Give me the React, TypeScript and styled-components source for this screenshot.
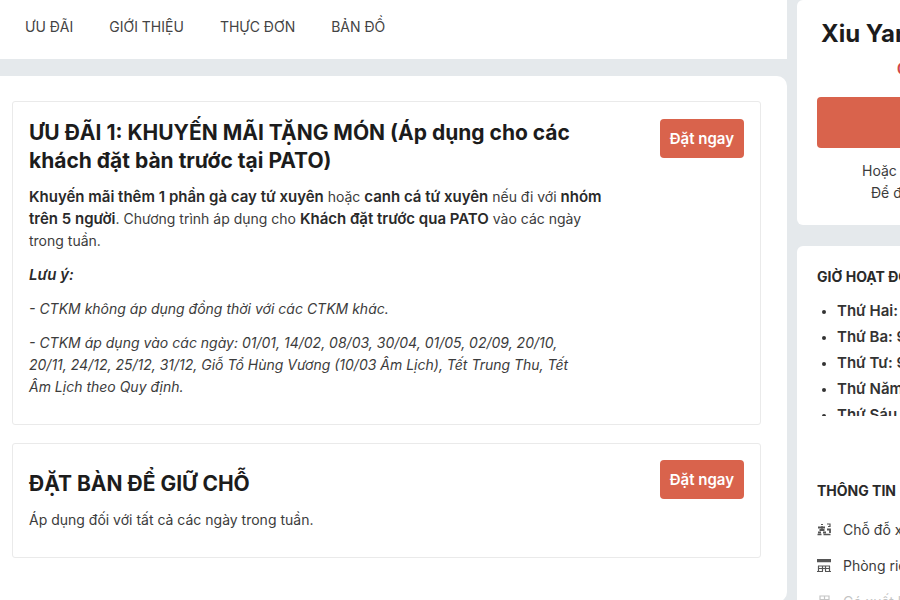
import React from "react";
import styled, { createGlobalStyle } from "styled-components";

const GlobalStyle = createGlobalStyle`
  *, *::before, *::after { box-sizing: border-box; }
  body {
    margin: 0;
    overflow: hidden;
    background: #e5e9ec;
    color: #3c3c3c;
    font-family: Inter, "Noto Sans", sans-serif;
    font-size: 14px;
    line-height: 22px;
  }
  h1, h2, h3, p, ul { margin: 0; padding: 0; }
`;

const Page = styled.div`
  display: flex;
  align-items: flex-start;
  gap: 10px;
  height: 100vh;
  overflow: hidden;
`;

const Main = styled.main`
  flex: 1;
  min-width: 0;
  display: flex;
  flex-direction: column;
  gap: 17px;
`;

const TabBar = styled.nav`
  display: flex;
  gap: 36px;
  padding: 16px 25px 21px;
  background: #fff;
`;

const TabLink = styled.a`
  color: #444;
  text-decoration: none;
`;

const OfferPanel = styled.section`
  display: flex;
  flex-direction: column;
  gap: 18px;
  padding: 25px 26px 44px 12px;
  background: #fff;
  border-radius: 0 10px 10px 0;
`;

const OfferCard = styled.article<{ $compact?: boolean }>`
  display: flex;
  align-items: flex-start;
  justify-content: space-between;
  gap: 50px;
  padding: ${(p) => (p.$compact ? "16px 16px 26px" : "17px 16px 26px")};
  border: 1px solid #eaeaea;
  border-radius: 3px;
`;

const OfferBody = styled.div<{ $compact?: boolean }>`
  flex: 1;
  padding-top: ${(p) => (p.$compact ? "10px" : "0")};
`;

const OfferTitle = styled.h2`
  margin-bottom: 11px;
  color: #1c1c1c;
  font-size: 21px;
  font-weight: 700;
  line-height: 28px;
`;

const OfferText = styled.p<{ $note?: boolean }>`
  padding-right: ${(p) => (p.$note ? "16px" : "0")};
  font-style: ${(p) => (p.$note ? "italic" : "normal")};

  & + & { margin-top: 12px; }
`;

const Strong = styled.strong`
  color: #2a2a2a;
  font-size: 15px;
  font-weight: 600;
`;

const BookButton = styled.button`
  flex: none;
  padding: 8px 10px;
  border: 0;
  border-radius: 4px;
  background: #d9634c;
  color: #fff;
  font: 600 15px/23px Inter, "Noto Sans", sans-serif;
  cursor: pointer;
`;

const Sidebar = styled.aside`
  flex: none;
  width: 310px;
  margin-right: -207px;
  display: flex;
  flex-direction: column;
  gap: 21px;
  white-space: nowrap;
`;

const SideCard = styled.section`
  padding: 20px;
  background: #fff;
  border-radius: 6px;
`;

const Restaurant = styled.h1`
  padding-left: 4px;
  color: #1c1c1c;
  font-size: 24px;
  font-weight: 700;
  line-height: 28px;
`;

const Distance = styled.p`
  padding: 10px 0 17px 80px;
  color: #d0474a;
  font-weight: 700;
`;

const ReserveButton = styled(BookButton)`
  display: block;
  width: 100%;
  height: 51px;
`;

const CallNote = styled.p<{ $indent: number }>`
  padding-left: ${(p) => p.$indent}px;
`;

const CallNotes = styled.div`
  padding: 12px 0 1px;
`;

const SideTitle = styled.h3`
  color: #2a2a2a;
  font-size: 14px;
  font-weight: 700;
  line-height: 22px;
`;

const Hours = styled.ul`
  height: 118px;
  margin: 10px 0 64px;
  padding-left: 20px;
  overflow: hidden;
  color: #333;
  font-size: 15px;
  font-weight: 600;
  line-height: 26px;

  li::marker { font-size: 12px; }
`;

const Amenities = styled.ul`
  display: flex;
  flex-direction: column;
  gap: 14px;
  padding-top: 17px;
  list-style: none;
`;

const Amenity = styled.li<{ $off?: boolean }>`
  display: flex;
  align-items: center;
  gap: 12px;
  opacity: ${(p) => (p.$off ? 0.3 : 1)};

  svg { display: block; width: 14px; height: 14px; }
`;

const ParkingIcon = () => (
  <svg viewBox="0 0 14 14" fill="none" stroke="#555" aria-hidden="true">
    <path d="M4 1.500h2M10 1h3v2.500h-2" strokeWidth="1.200" />
    <path d="M1 4.500h7M2.500 7h5M1 9.500h3M6 9.500h3M10 6.500h3v3.500" strokeWidth="1.800" />
    <path d="M0.500 11.500h4M6.500 11.500h7M5 3v5" strokeWidth="1.300" />
  </svg>
);

const RoomIcon = () => (
  <svg viewBox="0 0 14 14" fill="none" stroke="#555" aria-hidden="true">
    <path d="M0 1.500h14" strokeWidth="3.500" />
    <path d="M1 7h12M1 9.500h12M0 12.500h6M8 12.500h6M1.500 7v5M5.500 7v5M8.500 7v5M12.500 7v5" strokeWidth="1.200" />
  </svg>
);

const InvoiceIcon = () => (
  <svg viewBox="0 0 14 14" fill="none" stroke="#444" aria-hidden="true">
    <path d="M3 1h9v12H3zM3 4.500h9M3 7.500h9M3 10.500h9M7.500 1v12" strokeWidth="1.200" />
  </svg>
);

const tabs = [
  { label: "ƯU ĐÃI", href: "#uu-dai" },
  { label: "GIỚI THIỆU", href: "#gioi-thieu" },
  { label: "THỰC ĐƠN", href: "#thuc-don" },
  { label: "BẢN ĐỒ", href: "#ban-do" },
];

export default function App() {
  return (
    <>
      <GlobalStyle />
      <Page>
        <Main>
          <TabBar>
            {tabs.map((t) => (
              <TabLink key={t.href} href={t.href}>{t.label}</TabLink>
            ))}
          </TabBar>
          <OfferPanel id="uu-dai">
            <OfferCard>
              <OfferBody>
                <OfferTitle>
                  ƯU ĐÃI 1: KHUYẾN MÃI TẶNG MÓN (Áp dụng cho các khách đặt bàn trước tại PATO)
                </OfferTitle>
                <OfferText>
                  <Strong>Khuyến mãi thêm 1 phần gà cay tứ xuyên</Strong> hoặc{" "}
                  <Strong>canh cá tứ xuyên</Strong> nếu đi với <Strong>nhóm trên 5 người</Strong>.
                  Chương trình áp dụng cho <Strong>Khách đặt trước qua PATO</Strong> vào các ngày
                  trong tuần.
                </OfferText>
                <OfferText $note><Strong>Lưu ý:</Strong></OfferText>
                <OfferText $note>- CTKM không áp dụng đồng thời với các CTKM khác.</OfferText>
                <OfferText $note>
                  - CTKM áp dụng vào các ngày: 01/01, 14/02, 08/03, 30/04, 01/05, 02/09, 20/10,
                  20/11, 24/12, 25/12, 31/12, Giỗ Tổ Hùng Vương (10/03 Âm Lịch), Tết Trung Thu, Tết
                  Âm Lịch theo Quy định.
                </OfferText>
              </OfferBody>
              <BookButton type="button">Đặt ngay</BookButton>
            </OfferCard>
            <OfferCard $compact>
              <OfferBody $compact>
                <OfferTitle>ĐẶT BÀN ĐỂ GIỮ CHỖ</OfferTitle>
                <OfferText>Áp dụng đối với tất cả các ngày trong tuần.</OfferText>
              </OfferBody>
              <BookButton type="button">Đặt ngay</BookButton>
            </OfferCard>
          </OfferPanel>
        </Main>
        <Sidebar>
          <SideCard>
            <Restaurant>Xiu Yan</Restaurant>
            <Distance>0</Distance>
            <ReserveButton type="button" aria-label="Đặt bàn" />
            <CallNotes>
              <CallNote $indent={45}>Hoặc</CallNote>
              <CallNote $indent={54}>Để đ</CallNote>
            </CallNotes>
          </SideCard>
          <SideCard>
            <SideTitle>GIỜ HOẠT ĐỘNG</SideTitle>
            <Hours>
              <li>Thứ Hai:</li>
              <li>Thứ Ba: 9</li>
              <li>Thứ Tư: 9</li>
              <li>Thứ Năm</li>
              <li>Thứ Sáu</li>
            </Hours>
            <SideTitle>THÔNG TIN</SideTitle>
            <Amenities>
              <Amenity><ParkingIcon />Chỗ đỗ xe</Amenity>
              <Amenity><RoomIcon />Phòng riêng</Amenity>
              <Amenity $off><InvoiceIcon />Có xuất hoá đơn</Amenity>
            </Amenities>
          </SideCard>
        </Sidebar>
      </Page>
    </>
  );
}
